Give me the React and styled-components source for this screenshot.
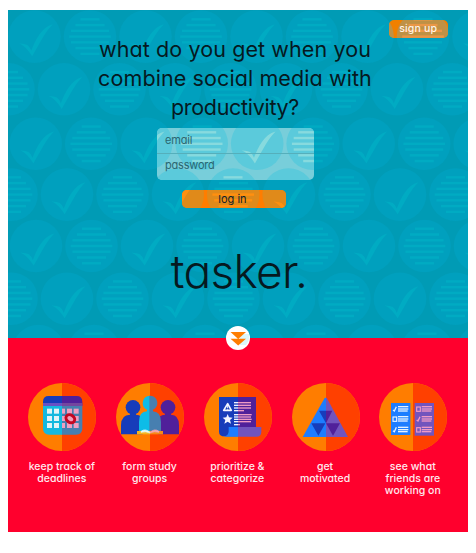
import React from "react";
import styled, { createGlobalStyle } from "styled-components";

const GlobalStyle = createGlobalStyle`
  * { box-sizing: border-box; }
  body { margin: 0; background: #fff; }
  button, input { font: inherit; color: inherit; }
`;

const FONT = `Inter, "Open Sans", sans-serif`;

const Page = styled.main`
  width: 460px;
  margin: 10px 0 0 7.5px;
  font-family: ${FONT};
  font-feature-settings: "cv11" 1, "ss03" 1;
  color: #06191f;
`;

const Hero = styled.header`
  position: relative;
  height: 328px;
  display: flex;
  flex-direction: column;
  align-items: center;
  isolation: isolate;
`;

const PatternSvg = styled.svg`
  position: absolute;
  inset: 0;
  width: 100%;
  height: 100%;
  z-index: -1;
`;

const Surface = styled.div`
  position: relative;
  isolation: isolate;
  overflow: hidden;
`;

const SignUp = styled(Surface).attrs({ as: "button" })`
  align-self: flex-end;
  width: 59.5px;
  height: 18px;
  margin: 10px 19.5px 0 0;
  padding: 0 0 1px;
  border: 0;
  border-radius: 5px;
  background: none;
  color: #fff3e6;
  font-size: 10.5px;
  font-weight: 500;
  line-height: 17px;
  letter-spacing: ${(p) => p.$tracking}px;
`;

const Headline = styled.h1`
  margin: -3px 5px 0 0;
  width: 300px;
  font-size: 21.5px;
  font-weight: 400;
  line-height: 29px;
  text-align: center;
`;

const HeadlineLine = styled.span`
  display: block;
  white-space: nowrap;
  letter-spacing: ${(p) => p.$tracking}px;
`;

const Form = styled.form`
  display: flex;
  flex-direction: column;
  align-items: center;
  margin: 6px 4px 0 0;
`;

const Fields = styled(Surface)`
  width: 157px;
  height: 51.5px;
  border-radius: 5px;
`;

const Field = styled.div`
  height: ${(p) => p.$height}px;
  padding: 0 8px;
  color: #2b6670;
  font-size: 11px;
  line-height: ${(p) => p.$line}px;
  letter-spacing: ${(p) => p.$tracking}px;
  border-bottom: ${(p) => (p.$divided ? "1px solid #55afbb" : "0")};
`;

const LogIn = styled(Surface).attrs({ as: "button" })`
  width: 104.5px;
  height: 17.5px;
  margin-top: 10.5px;
  margin-right: 3px;
  padding: 1px 3px 0 0;
  border: 0;
  border-radius: 5px;
  background: none;
  color: #102028;
  font-size: 11px;
  line-height: 17px;
  letter-spacing: ${(p) => p.$tracking}px;
`;

const Wordmark = styled.div`
  margin-top: 35px;
  margin-left: 3px;
  font-size: 46px;
  font-weight: 300;
  line-height: 56px;
  letter-spacing: -0.7px;
`;

const ScrollBadge = styled.svg`
  position: absolute;
  left: 218px;
  bottom: -11.5px;
  width: 24px;
  height: 24px;
  z-index: 2;
`;

const Features = styled.section`
  height: 194px;
  padding: 37px 9.8px 0 11.5px;
  display: flex;
  background: #ff002d;
  color: #ffe9ee;
`;

const Feature = styled.article`
  flex: 1;
  display: flex;
  flex-direction: column;
  align-items: center;
`;

const FeatureIcon = styled.svg`
  width: 85px;
  height: 85px;
  flex: none;
`;

const Caption = styled.div`
  margin: 1px 2px 0 0;
  font-size: 10.5px;
  font-weight: 500;
  line-height: 12px;
  white-space: nowrap;
  text-align: center;
`;

const CaptionLine = styled.span`
  display: block;
`;

const palettes = {
  teal: { base: "#009bb5", disc: "#00a0be", mark: "#00abc3" },
  frost: { base: "#78ceda", disc: "#5bcadb", mark: "#87dade" },
  orange: { base: "#ff7d00", disc: "#e08a1a", mark: "#ff9010" },
  amber: { base: "#f08000", disc: "#bf9144", mark: "#ea9746" },
};

/* first disc centre of every row, and whether that row starts with a check */
const rows = [
  { x: 34, y: 36.6, check: true },
  { x: 8, y: 89.3, check: false },
  { x: 35.2, y: 143.8, check: true },
  { x: 11, y: 194.6, check: false },
  { x: 35.5, y: 246, check: true },
  { x: -44.5, y: 298.7, check: true },
  { x: 38, y: 351, check: true },
];
const bars = [9.5, 14.5, 19, 20.8, 19, 14.5, 9.5];

function Pattern({ palette, box }) {
  const { base, disc, mark } = palettes[palette];
  const discs = rows.flatMap((row) =>
    Array.from({ length: 10 }, (_, i) => ({
      x: row.x + i * 55.5,
      y: row.y,
      check: row.check === (i % 2 === 0),
    }))
  );
  return (
    <PatternSvg viewBox={box} preserveAspectRatio="none" aria-hidden="true">
      <rect x="0" y="0" width="480" height="560" fill={base} />
      {discs.map((d) => (
        <g key={`${d.x}-${d.y}`} transform={`translate(${d.x} ${d.y})`}>
          <circle r="26.3" fill={disc} />
          {d.check ? (
            <path
              fill={mark}
              d="M-15.3 6.8Q-10 6.7-7.2 8.3Q-4.6 10-3.2 14C1 3 7-9.5 18.3-12.4C11-5 6 5-2.3 19.6C-6 14-9.5 9.5-15.3 6.8Z"
            />
          ) : (
            bars.map((w, i) => (
              <rect key={i} x={-w} y={(i - 3) * 5.75 - 1.2} width={w * 2} height="2.4" fill={mark} />
            ))
          )}
        </g>
      ))}
    </PatternSvg>
  );
}

function Disc({ children }) {
  return (
    <FeatureIcon viewBox="0 0 255 255" aria-hidden="true">
      <circle cx="126" cy="126" r="102" fill="#ff7d00" />
      <path d="M126 24a102 102 0 0 1 0 204Z" fill="#ff4000" />
      {children}
    </FeatureIcon>
  );
}

function CalendarIcon() {
  return (
    <Disc>
      <path d="M69 90H126V179H88Q69 179 69 160Z" fill="#14b9df" />
      <path d="M126 90H187V160Q187 179 168 179H126Z" fill="#477fb0" />
      <path d="M69 92V80Q69 63 86 63H126V92Z" fill="#173cba" />
      <path d="M126 63H170Q187 63 187 80V92H126Z" fill="#50209a" />
      <path d="M69 84H126V93H69Z" fill="#6852c5" />
      <path d="M126 84H187V93H126Z" fill="#74469f" />
      {[101, 123, 144].map((y) =>
        [81, 102, 126, 141, 161].map((x) => (
          <rect key={`${x}-${y}`} x={x} y={y} width={x === 126 ? 9 : 15} height="15" fill={x < 120 ? "#e2f3f6" : "#ef9fc2"} />
        ))
      )}
      <ellipse cx="151" cy="131" rx="14" ry="11" transform="rotate(35 151 131)" fill="#efa0bd" stroke="#c40722" strokeWidth="9" />
    </Disc>
  );
}

function GroupIcon() {
  return (
    <Disc>
      <circle cx="75" cy="97" r="22" fill="#173cba" />
      <path d="M39 178V151Q39 119 66 119V112H84V119Q104 120 104 139V178Z" fill="#173cba" />
      <circle cx="180" cy="97" r="22" fill="#50209a" />
      <path d="M213 178V151Q213 119 189 119V112H171V119Q151 120 151 139V178Z" fill="#50209a" />
      <path d="M126 62A22 22 0 0 0 117 104V109Q93 110 93 140V170H126Z" fill="#0dbce7" />
      <path d="M124 62H127A22 22 0 0 1 135 104V109Q159 111 159 140V170H124Z" fill="#477fb0" />
      <path d="M87 168H126V178H87Z" fill="#f4b51f" />
      <path d="M126 168H165V178H126Z" fill="#f58a18" />
      <path d="M99 169Q112 159 126 172V174Q112 168 99 172Z" fill="#e4fbfb" stroke="#e4fbfb" strokeWidth="2" />
      <path d="M126 172Q140 159 153 169V172Q139 168 126 174Z" fill="#f5a5b4" stroke="#f5a5b4" strokeWidth="2" />
    </Disc>
  );
}

function ScrollIcon() {
  return (
    <Disc>
      <path d="M69 66H126V184H86Q69 184 69 170Z" fill="#173cba" />
      <path d="M126 66H180V157H126Z" fill="#50209a" />
      <path d="M98 156H126V185H82Q98 183 98 169Z" fill="#1d7dff" />
      <path d="M126 156H196V170Q196 185 181 185H126Z" fill="#7254bd" />
      <path d="M95 86L83 106H106Z" fill="none" stroke="#f2f4ff" strokeWidth="5" strokeLinejoin="round" />
      <path d="M95 92V100M95 103V105" stroke="#f2f4ff" strokeWidth="3" />
      <path d="M95 117L99 127L110 128L102 135L105 146L95 140L85 146L88 135L80 128L91 127Z" fill="#f2f4ff" />
      {[
        [82, 51], [90, 51], [98, 51], [106, 30],
        [118, 53], [125, 51], [132, 53], [139, 51], [148, 18],
      ].map(([y, w]) => (
        <g key={y}>
          <rect x="114" y={y - 1} width="12" height="4" fill="#eef2ff" />
          <rect x="126" y={y - 1} width={w - 12} height="4" fill="#ee9ac4" />
        </g>
      ))}
    </Disc>
  );
}

function PyramidIcon() {
  return (
    <Disc>
      <path d="M126 68V186H56L122 69Z" fill="#1d7dff" />
      <path d="M126 68H128L192 186H126Z" fill="#7254bd" />
      <path d="M105 107H126V145Z" fill="#173cba" />
      <path d="M126 107H145L126 145Z" fill="#50209a" />
      <path d="M82 145H124L103 182Z" fill="#173cba" />
      <path d="M126 145H168L147 182Z" fill="#50209a" />
    </Disc>
  );
}

function ListEntry({ x, y, boxed, color }) {
  return (
    <g fill={color}>
      {boxed ? (
        <rect x={x + 7} y={y - 6} width="11" height="13" fill="none" stroke={color} strokeWidth="3.5" />
      ) : (
        <path d={`M${x + 7} ${y + 3}L${x + 11} ${y + 6}L${x + 17} ${y - 7}`} fill="none" stroke={color} strokeWidth="4" />
      )}
      <rect x={x + 22} y={y - 9} width="31" height="4" />
      <rect x={x + 22} y={y - 2} width="31" height="4" />
      <rect x={x + 22} y={y + 4} width="29" height="4" />
    </g>
  );
}

function ChecklistIcon() {
  return (
    <Disc>
      <rect x="60" y="84" width="58" height="96" fill="#1d7dff" />
      <rect x="131" y="84" width="58" height="98" fill="#7254bd" />
      {[102, 132, 164].map((y, i) => (
        <g key={y}>
          <ListEntry x={59} y={y} boxed={i === 1} color="#e4f1ff" />
          <ListEntry x={130} y={y} boxed={i !== 1} color="#f09ac5" />
        </g>
      ))}
    </Disc>
  );
}

const features = [
  { Icon: CalendarIcon, lines: ["keep track of", "deadlines"] },
  { Icon: GroupIcon, lines: ["form study", "groups"] },
  { Icon: ScrollIcon, lines: ["prioritize &", "categorize"] },
  { Icon: PyramidIcon, lines: ["get", "motivated"] },
  { Icon: ChecklistIcon, lines: ["see what", "friends are", "working on"] },
];

export default function App() {
  return (
    <>
      <GlobalStyle />
      <Page>
        <Hero>
          <Pattern palette="teal" box="7.5 10 460 328" />
          <SignUp $tracking={0.2}>
            <Pattern palette="amber" box="388.5 20 59.5 18" />
            sign up
          </SignUp>
          <Headline>
            <HeadlineLine $tracking={0.1}>what do you get when you</HeadlineLine>
            <HeadlineLine $tracking={0.1}>combine social media with</HeadlineLine>
            <HeadlineLine $tracking={-0.3}>productivity?</HeadlineLine>
          </Headline>
          <Form onSubmit={(e) => e.preventDefault()}>
            <Fields>
              <Pattern palette="frost" box="157 128 157 51.5" />
              <Field $height={26} $line={25} $tracking={-0.2} $divided>email</Field>
              <Field $height={25} $line={22} $tracking={-0.2}>password</Field>
            </Fields>
            <LogIn $tracking={0}>
              <Pattern palette="orange" box="181.8 190 104.5 17.5" />
              log in
            </LogIn>
          </Form>
          <Wordmark>tasker.</Wordmark>
          <ScrollBadge viewBox="0 0 24 24" aria-hidden="true">
            <circle cx="12" cy="12" r="12" fill="#fff" />
            <path d="M14 8L23 8Q24 14 20 19L14 19Z" fill="#dcf7fa" />
            <path d="M4.5 6H20L12.2 13ZM4.5 12.7H20L12.2 19.5Z" fill="#ff7d00" />
          </ScrollBadge>
        </Hero>
        <Features>
          {features.map(({ Icon, lines }) => (
            <Feature key={lines[0]}>
              <Icon />
              <Caption>
                {lines.map((text) => (
                  <CaptionLine key={text}>{text}</CaptionLine>
                ))}
              </Caption>
            </Feature>
          ))}
        </Features>
      </Page>
    </>
  );
}
